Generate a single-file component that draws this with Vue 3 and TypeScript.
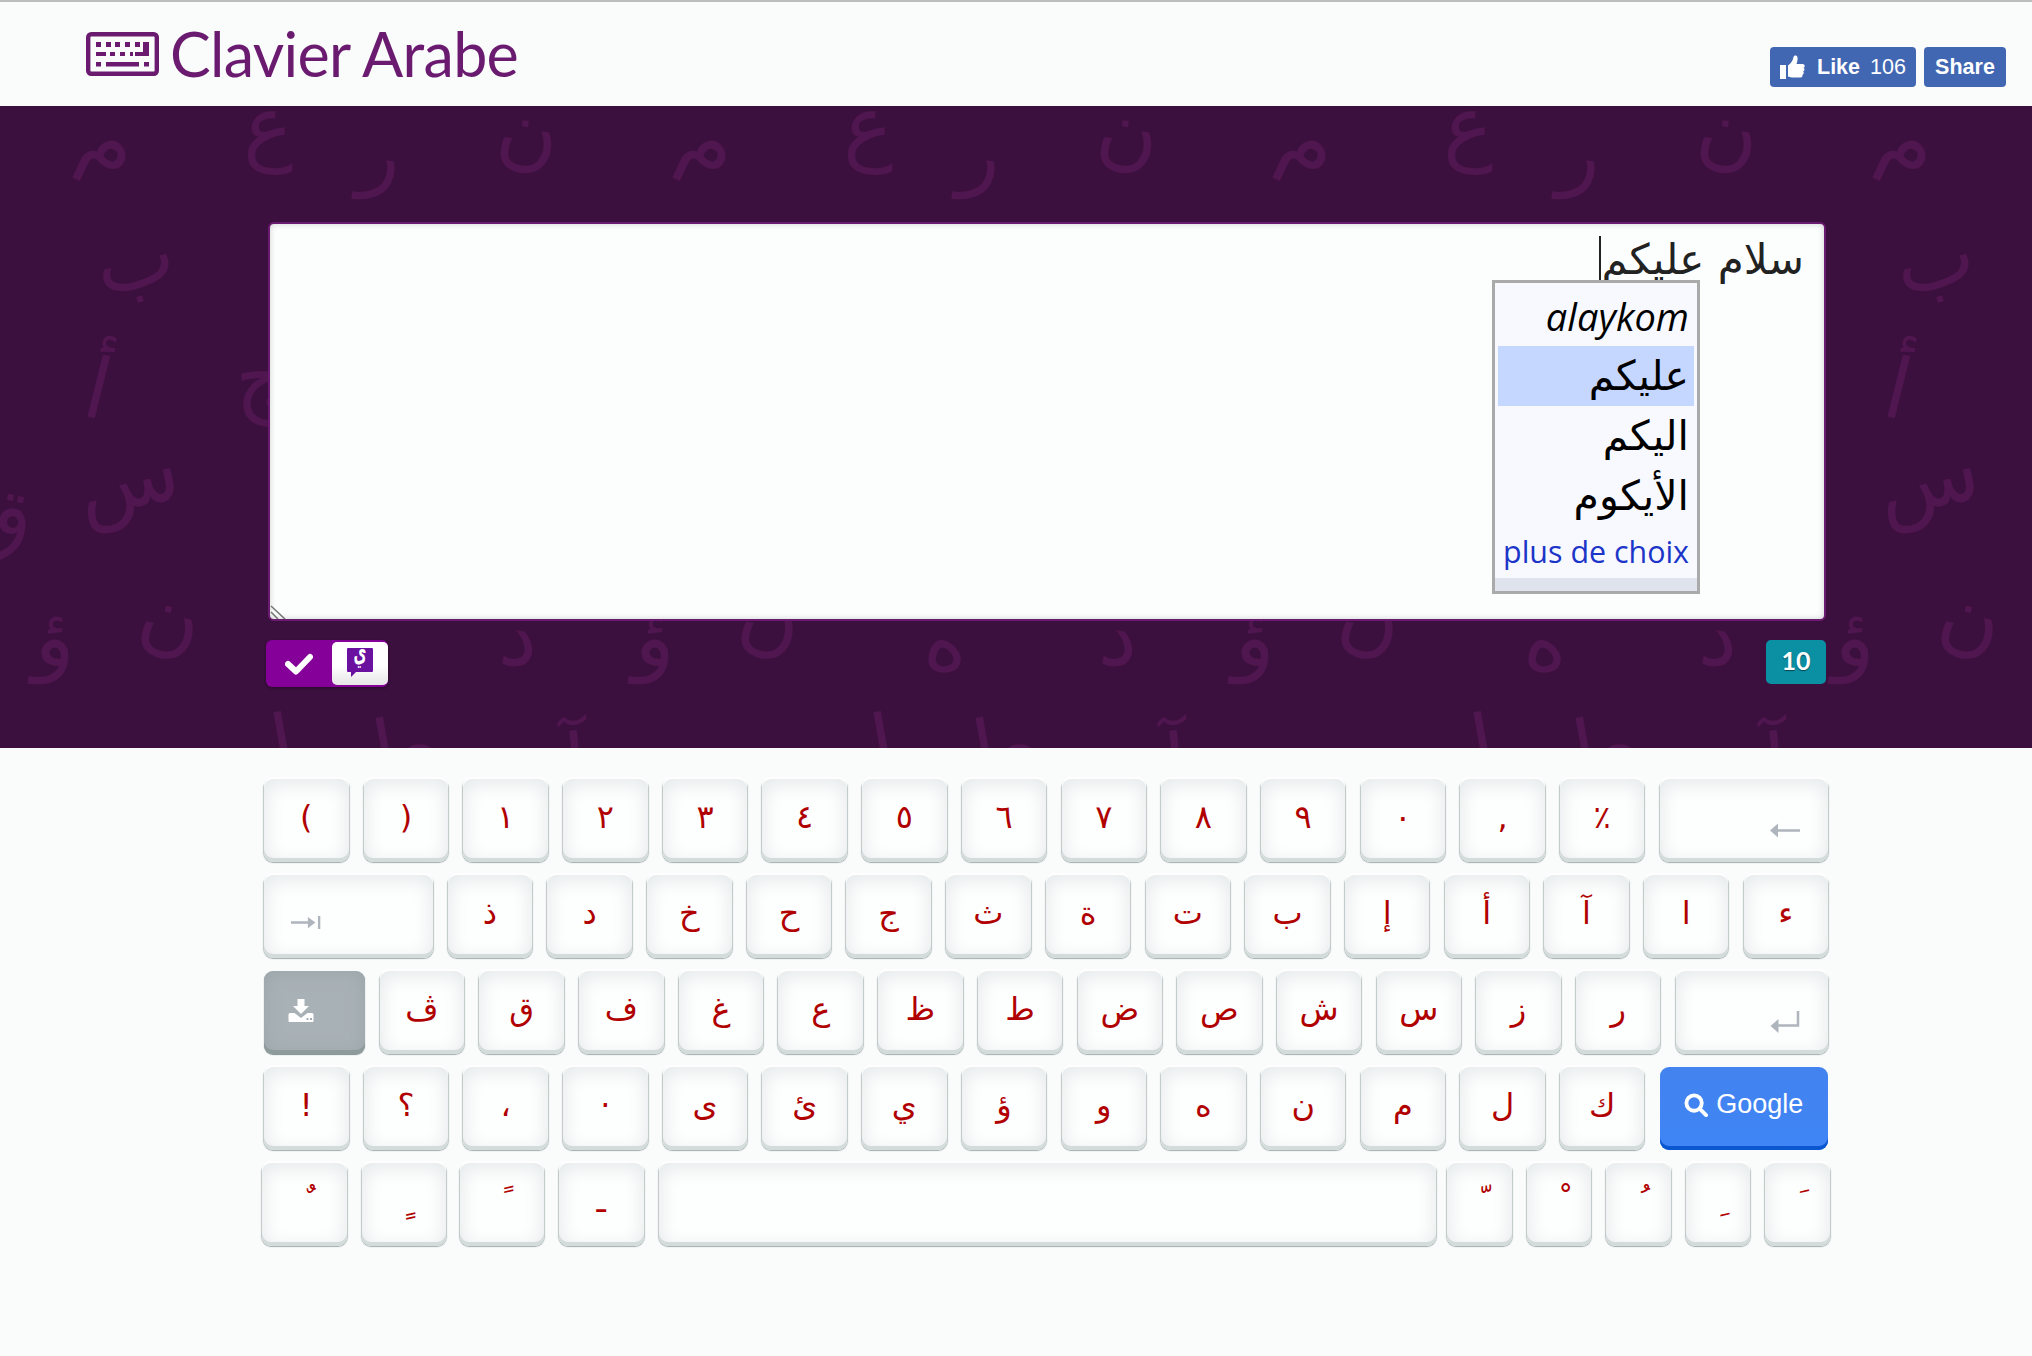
<script setup lang="ts">
// lignes du clavier, de haut en bas
interface Key {
  label?: string;
  kind?: string;
}

const k = (s: string): Key[] => s.split(' ').map((label) => ({ label }));
const NB = '\u00A0';

const rows: Key[][] = [
  [...k('( ) ١ ٢ ٣ ٤ ٥ ٦ ٧ ٨ ٩ ٠ , ٪'), { kind: 'back' }],
  [{ kind: 'tab' }, ...k('ذ د خ ح ج ث ة ت ب إ أ آ ا ء')],
  [{ kind: 'caps' }, ...k('ڤ ق ف غ ع ظ ط ض ص ش س ز ر'), { kind: 'enter' }],
  [...k('! ؟ ، · ى ئ ي ؤ و ه ن م ل ك'), { kind: 'google' }],
];

const lastRow: Key[] = [
  { label: NB + '\u064C', kind: 'mark' },
  { label: NB + '\u064D', kind: 'mark' },
  { label: NB + '\u064B', kind: 'mark tight' },
  { label: 'ـ' },
  { kind: 'space' },
  { label: NB + '\u0651', kind: 'mark short' },
  { label: NB + '\u0652', kind: 'mark short' },
  { label: NB + '\u064F', kind: 'mark short' },
  { label: NB + '\u0650', kind: 'mark short' },
  { label: NB + '\u064E', kind: 'mark short' },
];

// lettres du motif de fond : x/y en pixels dans une tuile de 600, r en degrés
const glyphs = [
  { c: 'م', x: 110, y: 64, r: 25 },
  { c: 'ع', x: 268, y: 48, r: 0 },
  { c: 'ر', x: 381, y: 76, r: 8 },
  { c: 'ن', x: 528, y: 54, r: 8 },
  { c: 'ب', x: 135, y: 182, r: -12 },
  { c: 'أ', x: 97, y: 312, r: 14 },
  { c: 'س', x: 128, y: 402, r: -12 },
  { c: 'ج', x: 262, y: 300, r: 0 },
  { c: 'ق', x: 0, y: 440, r: 12 },
  { c: 'ن', x: 170, y: 540, r: 12 },
  { c: 'ؤ', x: 56, y: 560, r: 6 },
  { c: 'د', x: 520, y: 560, r: 10 },
  { c: 'ه', x: 347, y: 565, r: 10 },
  { c: 'ل', x: 265, y: 672, r: -10 },
  { c: 'ط', x: 400, y: 672, r: -10 },
  { c: 'آ', x: 577, y: 688, r: -6 },
];
const tiles = [0, 600, 1200, 1800, 2400];

const suggestions = ['عليكم', 'اليكم', 'الأيكوم'];
</script>

<template>
  <div class="page">
    <header class="top">
      <div class="brand">
        <svg class="brand-icon" viewBox="0 0 73 44">
          <rect x="2.2" y="2.2" width="68.6" height="39.6" rx="3" fill="none" stroke="currentColor" stroke-width="4.4" />
          <g fill="currentColor">
            <rect x="10" y="10" width="5" height="5" />
            <rect x="20" y="10" width="5" height="5" />
            <rect x="29" y="10" width="5" height="5" />
            <rect x="39" y="10" width="5" height="5" />
            <rect x="49" y="10" width="5" height="5" />
            <path d="M57 10h6v14H49v-4h8z" />
            <rect x="10" y="20" width="10" height="4" />
            <rect x="24" y="20" width="5" height="4" />
            <rect x="34" y="20" width="5" height="4" />
            <rect x="44" y="20" width="3" height="4" />
            <rect x="10" y="30" width="5" height="4.5" />
            <rect x="20" y="30" width="33" height="4.5" />
            <rect x="58" y="30" width="5" height="4.5" />
          </g>
        </svg>
        <h1 class="title">Clavier Arabe</h1>
      </div>
      <div class="social">
        <div class="fb-btn like">
          <svg class="thumb" viewBox="0 0 25 24">
            <path fill="#fff" d="M0 10h6v14H0zM8 10.5c3-2 5-5 5.500-8.500 .2-1.800 3.500-2.500 4 .5 .4 2.500-.5 5-1 6.500h6c2.500 0 3 3 1 3.800 1.500 1 1.200 3-.3 3.500 1 1.200 .5 3-.8 3.400 .5 1.500-.3 2.800-2 2.800H12c-2 0-2.500-1-4-1z" />
          </svg>
          <b>Like</b>
          <span>106</span>
        </div>
        <div class="fb-btn share"><b>Share</b></div>
      </div>
    </header>

    <section class="banner">
      <svg class="pattern" width="2032" height="642">
        <g v-for="t in tiles" :key="t">
          <text
            v-for="g in glyphs"
            :key="g.c + g.x"
            :x="g.x + t"
            :y="g.y"
            :transform="`rotate(${g.r} ${g.x + t} ${g.y - 25})`"
            text-anchor="middle"
          >{{ g.c }}</text>
        </g>
      </svg>

      <div class="editor">
        <div class="editor-text" dir="rtl">سلام عليكم<span class="caret"></span></div>

        <div class="popup">
          <div class="item latin">alaykom</div>
          <div v-for="(s, i) in suggestions" :key="s" class="item" :class="{ selected: i === 0 }" dir="rtl">{{ s }}</div>
          <div class="more">plus de choix</div>
          <div class="popup-foot"></div>
        </div>

        <svg class="grip" viewBox="0 0 16 14">
          <path d="M1 1l14 13M1 7l7 7" fill="none" stroke="#777" stroke-width="1.600" />
        </svg>
      </div>

      <div class="tools">
        <div class="toggle">
          <span class="toggle-check">
            <svg viewBox="0 0 28 22" width="28" height="22">
              <path d="M3 11l8 7.500L25 4" fill="none" stroke="#fff" stroke-width="6" stroke-linejoin="round" stroke-linecap="round" />
            </svg>
          </span>
          <span class="toggle-logo">
            <svg viewBox="0 0 26 30" width="26" height="30">
              <path fill="#6a11a0" d="M1 0h24a1 1 0 0 1 1 1v22a1 1 0 0 1-1 1H9l-5 5v-5H1a1 1 0 0 1-1-1V1a1 1 0 0 1 1-1z" />
              <text transform="translate(13 13) scale(0.7 1.35)" text-anchor="middle" fill="#fff" class="logo-letter">ي</text>
            </svg>
          </span>
        </div>
        <div class="count">10</div>
      </div>
    </section>

    <main class="keyboard">
      <div v-for="(row, r) in rows" :key="r" class="row">
        <div v-for="(key, i) in row" :key="i" class="key" :class="key.kind">
          <template v-if="key.label">{{ key.label }}</template>

          <svg v-else-if="key.kind === 'back'" class="sym" viewBox="0 0 30 16">
            <path d="M30 8H8" stroke="#aeb5bd" stroke-width="2.500" fill="none" />
            <path d="M0 8l8-7v14z" fill="#aeb5bd" />
          </svg>

          <svg v-else-if="key.kind === 'tab'" class="sym" viewBox="0 0 32 16">
            <path d="M0 8h20M30 1v14" stroke="#aeb5bd" stroke-width="2.500" fill="none" />
            <path d="M26 8l-8-6v12z" fill="#aeb5bd" />
          </svg>

          <svg v-else-if="key.kind === 'caps'" class="sym" viewBox="0 0 25 23">
            <path fill="#fff" d="M9 0h7v7h4.500L12.500 15 4.500 7H9z" />
            <path fill="#fff" d="M1.500 14H6l6.500 5L19 14h4.500a1.500 1.500 0 0 1 1.500 1.500V22a1 1 0 0 1-1 1H1a1 1 0 0 1-1-1v-6.500A1.500 1.500 0 0 1 1.500 14z" />
            <path fill="#a5aeb3" d="M18 19h2v2h-2zM21.500 19h2v2h-2z" />
          </svg>

          <svg v-else-if="key.kind === 'enter'" class="sym" viewBox="0 0 29 23">
            <path d="M27.500 0v14.500H7" stroke="#aeb5bd" stroke-width="2.500" fill="none" />
            <path d="M0 15l8-7v14z" fill="#aeb5bd" />
          </svg>

          <template v-else-if="key.kind === 'google'">
            <svg class="glass" viewBox="0 0 25 25">
              <circle cx="10.500" cy="10.500" r="8" fill="none" stroke="#fff" stroke-width="4" />
              <path d="M16.500 16.500l6.500 6.500" stroke="#fff" stroke-width="4" stroke-linecap="round" />
            </svg>
            <span>Google</span>
          </template>
        </div>
      </div>
      <div class="row last">
        <div v-for="(key, i) in lastRow" :key="i" class="key" :class="key.kind">{{ key.label }}</div>
      </div>
    </main>
  </div>
</template>

<style>
html,
body {
  margin: 0;
  background: #fafbfb;
}
</style>

<style scoped>
.page {
  min-height: 1356px;
  background: #fafbfb;
  font-family: "DejaVu Sans", sans-serif;
}

.top {
  box-sizing: border-box;
  height: 106px;
  border-top: 2px solid #bcbcbc;
  padding: 0 26px 0 86px;
  display: flex;
  justify-content: space-between;
  align-items: center;
}

.brand {
  display: flex;
  align-items: center;
  gap: 11px;
  color: #6a1b70;
}

.brand-icon {
  width: 73px;
  height: 44px;
}

.title {
  margin: 0;
  font-family: Lato, sans-serif;
  font-weight: 400;
  font-size: 61px;
  line-height: 70px;
  letter-spacing: -0.7px;
  white-space: nowrap;
}

.social {
  display: flex;
  gap: 8px;
  margin-top: 26px;
}

.fb-btn {
  box-sizing: border-box;
  height: 40px;
  background: #4267b2;
  border-radius: 4px;
  color: #fff;
  font-family: "Liberation Sans", Arial, sans-serif;
  font-size: 21.5px;
  display: flex;
  align-items: center;
}

.like {
  width: 146px;
  padding-left: 10px;
}

.thumb {
  width: 25px;
  height: 24px;
  margin-right: 12px;
}

.like span {
  margin-left: 10px;
}

.share {
  width: 82px;
  justify-content: center;
}

.banner {
  position: relative;
  box-sizing: border-box;
  height: 642px;
  padding: 116px 206px 0 266px;
  background: #3c103e;
  overflow: hidden;
}

.pattern {
  position: absolute;
  left: 0;
  top: 0;
}

.pattern text {
  font-family: "DejaVu Sans", sans-serif;
  font-size: 84px;
  fill: #50164f;
}

.editor {
  position: relative;
  box-sizing: border-box;
  height: 399px;
  margin: 0 0 0 2px;
  border: 2px solid #6a1b70;
  border-radius: 6px;
  background: #fcfefd;
  box-shadow: inset 0 0 6px rgba(0, 0, 0, 0.18);
}

.editor-text {
  padding: 12px 20px 0 0;
  font-size: 42px;
  line-height: 48px;
  color: #222;
  white-space: nowrap;
}

.caret {
  display: inline-block;
  width: 2px;
  height: 44px;
  margin-right: 1px;
  vertical-align: top;
  background: #222;
}

.popup {
  position: absolute;
  left: 1222px;
  top: 56px;
  box-sizing: border-box;
  width: 208px;
  height: 314px;
  border: 3px solid #aaa;
  background: #f7f9ff;
  padding: 3px 3px 0;
  color: #000;
  font-size: 41px;
  display: flex;
  flex-direction: column;
}

.item {
  height: 60px;
  line-height: 60px;
  padding: 0 5px;
  text-align: right;
  white-space: nowrap;
}

.item.latin {
  font-style: italic;
  font-family: "Open Sans", sans-serif;
  font-size: 38px;
}

.item.selected {
  background: #c5d7ff;
}

.more {
  height: 52px;
  line-height: 52px;
  padding: 0 5px;
  text-align: right;
  color: #1c35c8;
  font-family: "Open Sans", sans-serif;
  font-size: 30.400px;
  white-space: nowrap;
}

.popup-foot {
  flex: 1;
  margin: 0 -3px;
  background: #dfe3ed;
}

.grip {
  position: absolute;
  left: 0;
  bottom: 0;
  width: 16px;
  height: 14px;
}

.tools {
  position: relative;
  display: flex;
  justify-content: space-between;
  align-items: flex-start;
  margin-top: 19px;
}

.toggle {
  width: 122px;
  height: 47px;
  border-radius: 6px;
  background: #850099;
  box-shadow: 0 1px 3px rgba(0, 0, 0, 0.4);
  display: flex;
  align-items: center;
  justify-content: space-between;
}

.toggle-check {
  width: 66px;
  display: flex;
  justify-content: center;
}

.toggle-logo {
  width: 56px;
  height: 43px;
  border-radius: 5px;
  background: linear-gradient(180deg, #fff 55%, #e6e6e6);
  display: flex;
  align-items: flex-start;
  justify-content: center;
  padding-top: 6px;
  box-sizing: border-box;
}

.logo-letter {
  font-size: 20px;
  font-weight: 700;
  font-family: "DejaVu Sans", sans-serif;
}

.count {
  width: 60px;
  height: 44px;
  border-radius: 5px;
  background: #0a8fa3;
  color: #fff;
  font-family: Lato, sans-serif;
  font-weight: 700;
  font-size: 25px;
  line-height: 41px;
  text-align: center;
  text-shadow: 0 1px 1px rgba(0, 0, 0, 0.5);
}

.keyboard {
  padding: 31px 0 0 264px;
  width: 1564px;
  display: flex;
  flex-direction: column;
  gap: 13px;
}

.row {
  display: flex;
  gap: 15.200px;
}

.row.last {
  width: 1568px;
  margin-left: -2px;
  gap: 15px;
}

.key {
  box-sizing: border-box;
  flex: none;
  width: 84.500px;
  height: 83px;
  padding-bottom: 8px;
  border-radius: 9px;
  background: #fdfefe;
  box-shadow:
    0 -2px 0 #fff,
    inset 0 -4px 0 #d4dcdb,
    inset 0 3px 20px #e2e6e7,
    0 1px 1px #a5b0b0,
    1px 0 1px #c2caca,
    -1px 0 1px #c2caca;
  color: #b00000;
  font-size: 32px;
  line-height: 1;
  display: flex;
  align-items: center;
  justify-content: center;
  white-space: pre;
}

.key.back,
.key.enter,
.key.google {
  flex: 1;
}

.key.tab {
  width: 168.500px;
  justify-content: flex-start;
  padding: 12px 0 0 27px;
}

.key.back {
  justify-content: flex-end;
  padding: 19px 28px 0 0;
}

.key.enter {
  justify-content: flex-end;
  padding: 20px 28px 0 0;
}

.key.caps {
  width: 100.500px;
  justify-content: flex-start;
  padding: 0 0 5px 22px;
  background: #a8b1b6;
  box-shadow:
    inset 0 -4px 0 #8e9b9b,
    inset 0 0 18px #9aa5a8,
    0 1px 1px #7f8d8d;
}

.key.google {
  background: linear-gradient(180deg, #4283ef, #3f85f5);
  box-shadow: inset 0 -4px 0 #0b57d0;
  color: #fff;
  font-family: "Liberation Sans", Arial, sans-serif;
  font-size: 27px;
  gap: 8px;
  padding-bottom: 8px;
}

.key.mark {
  padding-left: 8px;
}

.key.tight {
  margin-left: -1.500px;
}

.key.space {
  flex: 1;
  margin-right: -4px;
}

.key.short {
  width: 64.600px;
}

.sym {
  width: 30px;
  height: 23px;
}

.glass {
  width: 24px;
  height: 24px;
}
</style>
